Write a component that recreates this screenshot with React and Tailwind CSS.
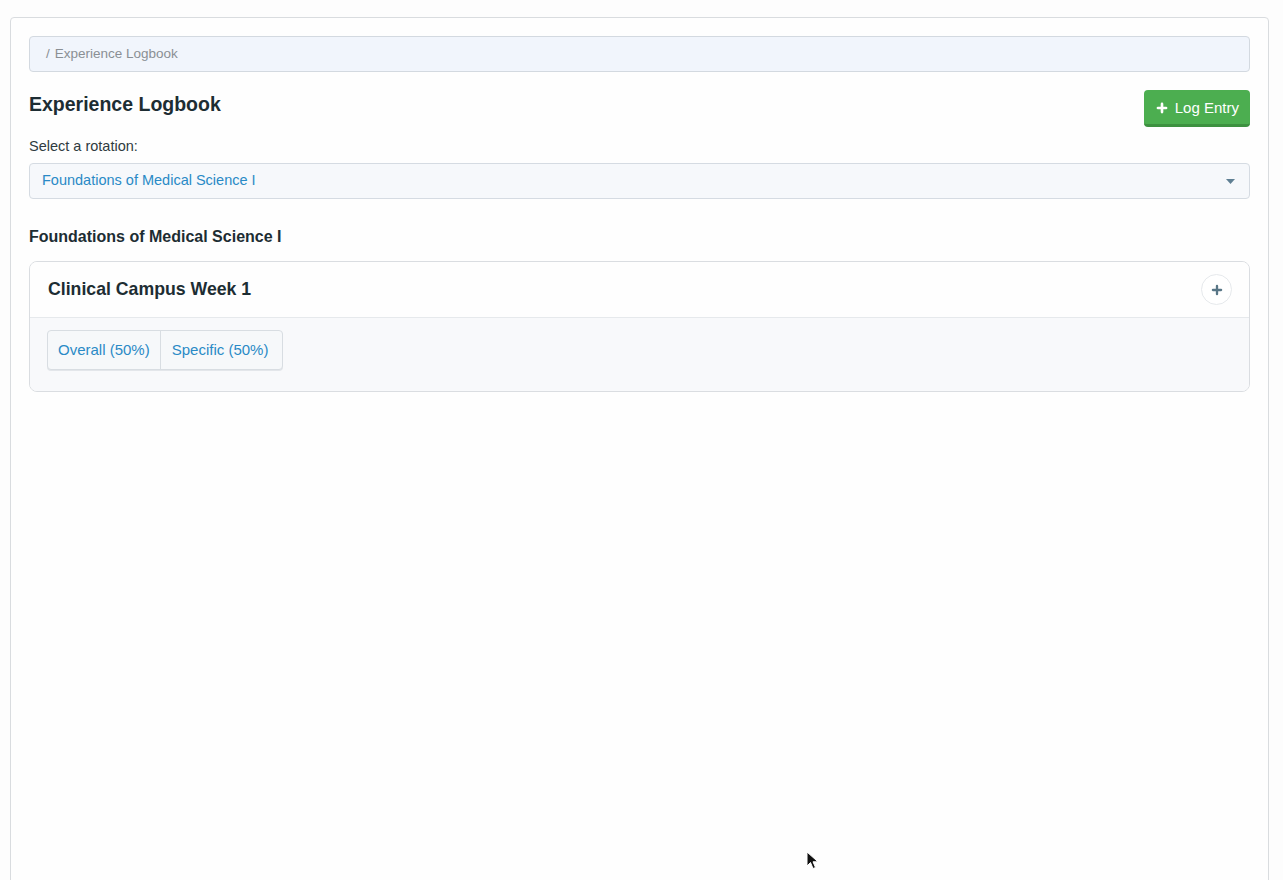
import { Plus } from "lucide-react";

const font = { fontFamily: '"Liberation Sans", Arial, sans-serif' };

const Cursor = () => (
  <svg className="absolute left-[806px] top-[851px]" width="14" height="20" viewBox="0 0 14 20">
    <path d="M1 1 L1 15 L4.5 11.5 L7 17.5 L9.5 16.5 L7 10.8 L12 10.8 Z" fill="#111" stroke="#fff" strokeWidth="1" />
  </svg>
);

export default function App() {
  return (
    <div className="relative min-h-screen bg-[#fdfdfd] overflow-hidden" style={font}>
      <div className="ml-[10px] mr-[14px] mt-[17px] h-[900px] rounded-t-[4px] border border-[#d9dcdf] bg-[#fefefe] px-[18px] pt-[18px]">
        {/* breadcrumb */}
        <div className="flex h-[36px] items-center rounded-[4px] border border-[#d3d9e0] bg-[#f1f5fc] px-[16px] text-[13.5px] text-[#8a8f94]">
          <span className="mr-[5px]">/</span>
          <span>Experience Logbook</span>
        </div>

        <div className="mt-[18px] flex items-start justify-between">
          <h1 className="mt-[2px] text-[19.5px] font-bold leading-[24px] text-[#1d2d33]">Experience Logbook</h1>
          <button className="flex h-[37px] items-center gap-[6px] rounded-[4px] border-b-[3px] border-[#3d9140] bg-[#4cae50] px-[11px] pt-[2px] text-[15px] text-white">
            <Plus size={14} strokeWidth={4.5} />
            Log Entry
          </button>
        </div>

        <div className="mt-[9px] text-[14.5px] leading-[20px] text-[#2f3b40]">Select a rotation:</div>
        <div className="mt-[7px] flex h-[36px] items-center justify-between rounded-[4px] border border-[#d5dbe2] bg-[#f6f8fb] pl-[12px] pr-[14px] text-[14.5px] text-[#2a8ac6]">
          <span>Foundations of Medical Science I</span>
          <svg width="9" height="5" viewBox="0 0 9 5"><path d="M0 0 L9 0 L4.5 5 Z" fill="#5f7f93" /></svg>
        </div>

        <h2 className="mt-[29px] text-[16px] font-bold leading-[18px] text-[#1d2d33]">Foundations of Medical Science I</h2>

        <div className="mt-[15px] overflow-hidden rounded-[8px] border border-[#dadde1]">
          <div className="flex h-[56px] items-center justify-between border-b border-[#e6e9ec] bg-[#fefefe] pl-[18px] pr-[17px]">
            <span className="text-[17.7px] font-bold text-[#1d2d33]">Clinical Campus Week 1</span>
            <div className="flex h-[31px] w-[31px] items-center justify-center rounded-full border border-[#e6e9ec] bg-white text-[#587686]">
              <Plus size={14} strokeWidth={4} />
            </div>
          </div>
          <div className="bg-[#f8f9fb] pb-[21px] pl-[17px] pt-[12px]">
            <div className="inline-flex h-[40px] overflow-hidden rounded-[4px] border border-[#d8dde2] bg-[#f6f8fa] text-[15px] text-[#2a8ac6] shadow-[0_1px_0_#e3e6ea]">
              <span className="flex items-center border-r border-[#d8dde2] pl-[10px] pr-[10px]">Overall (50%)</span>
              <span className="flex items-center pl-[11px] pr-[14px]">Specific (50%)</span>
            </div>
          </div>
        </div>
      </div>
      <Cursor />
    </div>
  );
}
